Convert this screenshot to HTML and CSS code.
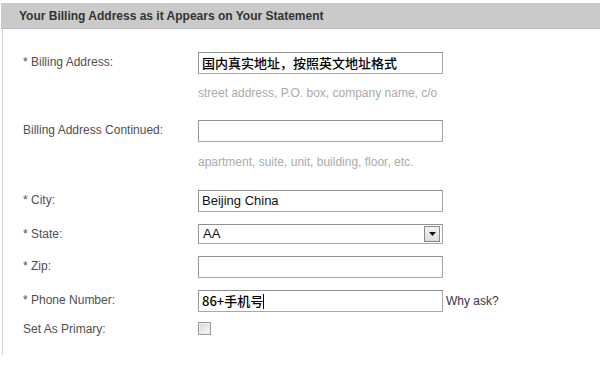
FILE: index.html
```html
<!DOCTYPE html>
<html lang="en">
<head>
<meta charset="utf-8">
<title>Billing Address</title>
<link rel="stylesheet" href="styles.css">
</head>
<body>
<div class="panel">
  <div class="header">Your Billing Address as it Appears on Your Statement</div>
  <div class="body">
    <div class="row">
      <div class="label">* Billing Address:</div>
      <div class="input cjk">国内真实地址，按照英文地址格式</div>
    </div>
    <div class="hint">street address, P.O. box, company name, c/o</div>

    <div class="row">
      <div class="label">Billing Address Continued:</div>
      <div class="input"></div>
    </div>
    <div class="hint hint2">apartment, suite, unit, building, floor, etc.</div>

    <div class="row">
      <div class="label">* City:</div>
      <div class="input">Beijing China</div>
    </div>

    <div class="row tight">
      <div class="label">* State:</div>
      <div class="select"><span>AA</span><span class="arrow"><svg width="7" height="4" viewBox="0 0 7 4"><path d="M0 0h7L3.5 4z" fill="#111"/></svg></span></div>
    </div>

    <div class="row tight">
      <div class="label">* Zip:</div>
      <div class="input"></div>
    </div>

    <div class="row tight">
      <div class="label">* Phone Number:</div>
      <div class="input cjk">86+手机号<span class="caret"></span></div>
      <a class="why" href="#">Why ask?</a>
    </div>

    <div class="row check-row">
      <div class="label">Set As Primary:</div>
      <div class="checkbox"></div>
    </div>
  </div>
</div>
</body>
</html>
```
FILE: styles.css
```css
* { box-sizing: border-box; }
html, body { margin: 0; padding: 0; background: #fff; }
body {
  font-family: "Liberation Sans", Arial, "Noto Sans CJK SC", sans-serif;
  font-size: 12px;
  color: #4d4d4d;
}
.panel { padding-top: 3px; padding-left: 1px; }
.header {
  height: 26px;
  line-height: 27px;
  background: #cacaca;
  border-bottom: 1px solid #bdbdbd;
  padding-left: 18px;
  font-weight: bold;
  font-size: 12px;
  color: #333;
}
.body {
  margin-left: 1px;
  border-left: 1px solid #d2d2d2;
  height: 326px;
  padding: 23px 0 0 20px;
}
.row {
  display: grid;
  grid-template-columns: 175px 245px auto;
  align-items: start;
}
.label {
  padding-top: 3px;
  line-height: 14px;
  color: #4f4f4f;
}
.input, .select {
  height: 22px;
  border: 1px solid #a8a8a8;
  border-top-color: #8f8f8f;
  border-left-color: #999;
  background: #fff;
  padding: 0 3px;
  font-size: 13px;
  line-height: 20px;
  color: #111;
  white-space: nowrap;
  overflow: hidden;
}
.cjk {
  font-family: "Noto Sans CJK SC", "Liberation Sans", sans-serif;
  font-size: 13px;
  font-weight: 500;
  line-height: 19px;
  color: #000;
}
.caret {
  display: inline-block;
  width: 1px;
  height: 15px;
  background: #000;
  vertical-align: -3px;
}
.hint {
  margin: 11px 0 19px 175px;
  line-height: 16px;
  color: #ababab;
  font-size: 12px;
}
.hint2 { margin-top: 12px; margin-bottom: 20px; }
.tight { margin-top: 12px; }
.select {
  height: 20px;
  display: flex;
  justify-content: space-between;
  align-items: center;
  padding: 0 2px 0 4px;
  line-height: 18px;
}
.arrow {
  width: 16px;
  height: 16px;
  border: 1px solid #8a8a8a;
  background: linear-gradient(#f4f4f4, #dcdcdc);
  display: flex;
  align-items: center;
  justify-content: center;
}
.why {
  padding-top: 4px;
  padding-left: 3px;
  line-height: 14px;
  color: #3a3346;
  text-decoration: none;
}
.check-row { margin-top: 10px; }
.check-row .label { padding-top: 0; }
.checkbox {
  width: 13px;
  height: 13px;
  border: 1px solid #9a9a9a;
  background: linear-gradient(135deg, #d8d8d8, #f8f8f8);
  box-shadow: inset 0 0 0 1px #eee;
}
```
